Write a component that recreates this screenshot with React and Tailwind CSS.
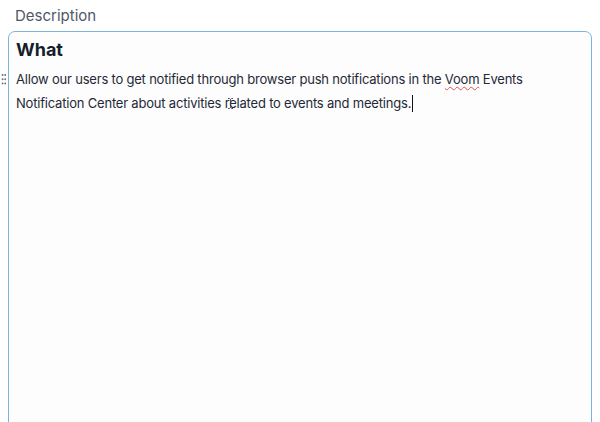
import React from 'react';

const DragHandle = () => (
  <svg width="6" height="13" viewBox="0 0 6 13" className="absolute left-[1px] top-[73px]">
    {[0, 1, 2].map((r) => (
      <g key={r}>
        <circle cx="1.6" cy={2 + r * 4.2} r="0.95" fill="#6b7280" />
        <circle cx="4.2" cy={2 + r * 4.2} r="0.95" fill="#6b7280" />
      </g>
    ))}
  </svg>
);

// mouse text cursor hovering over the paragraph
const IBeam = () => (
  <svg width="7" height="11" viewBox="0 0 7 11" className="absolute left-[-2px] top-[3px]">
    <path d="M1 0.5h1.5l1 1 1-1H6M3.5 1.5v8M1 10.5h1.5l1-1 1 1H6" fill="none" stroke="#3a3f47" strokeWidth="0.9" />
  </svg>
);

const App = () => {
  return (
    <div className="relative h-[422px] w-[600px] overflow-hidden bg-white font-['Inter',sans-serif]">
      <div className="px-[15px] pt-[5px] text-[15px] leading-[22px] text-[#4f5866]">Description</div>
      <DragHandle />
      <div className="mx-[8px] mt-[4px] h-[420px] rounded-[7px] border border-[#7db4dd] bg-[#fdfdfd] px-[7px] pt-[6px]">
        <h1 className="text-[18px] font-bold leading-[24px] text-[#141e2c]">What</h1>
        <p className="mt-[6px] text-[13px] leading-[23px] tracking-[-0.2px] text-[#1f2937]">
          Allow our users to get notified through browser push notifications in the{' '}
          <span className="underline decoration-wavy decoration-[#e05252] decoration-1 underline-offset-2">Voom</span> Events
          <br />
          Notification Center about activities r
          <span className="relative">
            e
            <IBeam />
          </span>
          lated to events and meetings.
          <span className="ml-[1px] inline-block h-[17px] w-[1px] translate-y-[4px] bg-[#111]" />
        </p>
      </div>
    </div>
  );
};

export default App;
